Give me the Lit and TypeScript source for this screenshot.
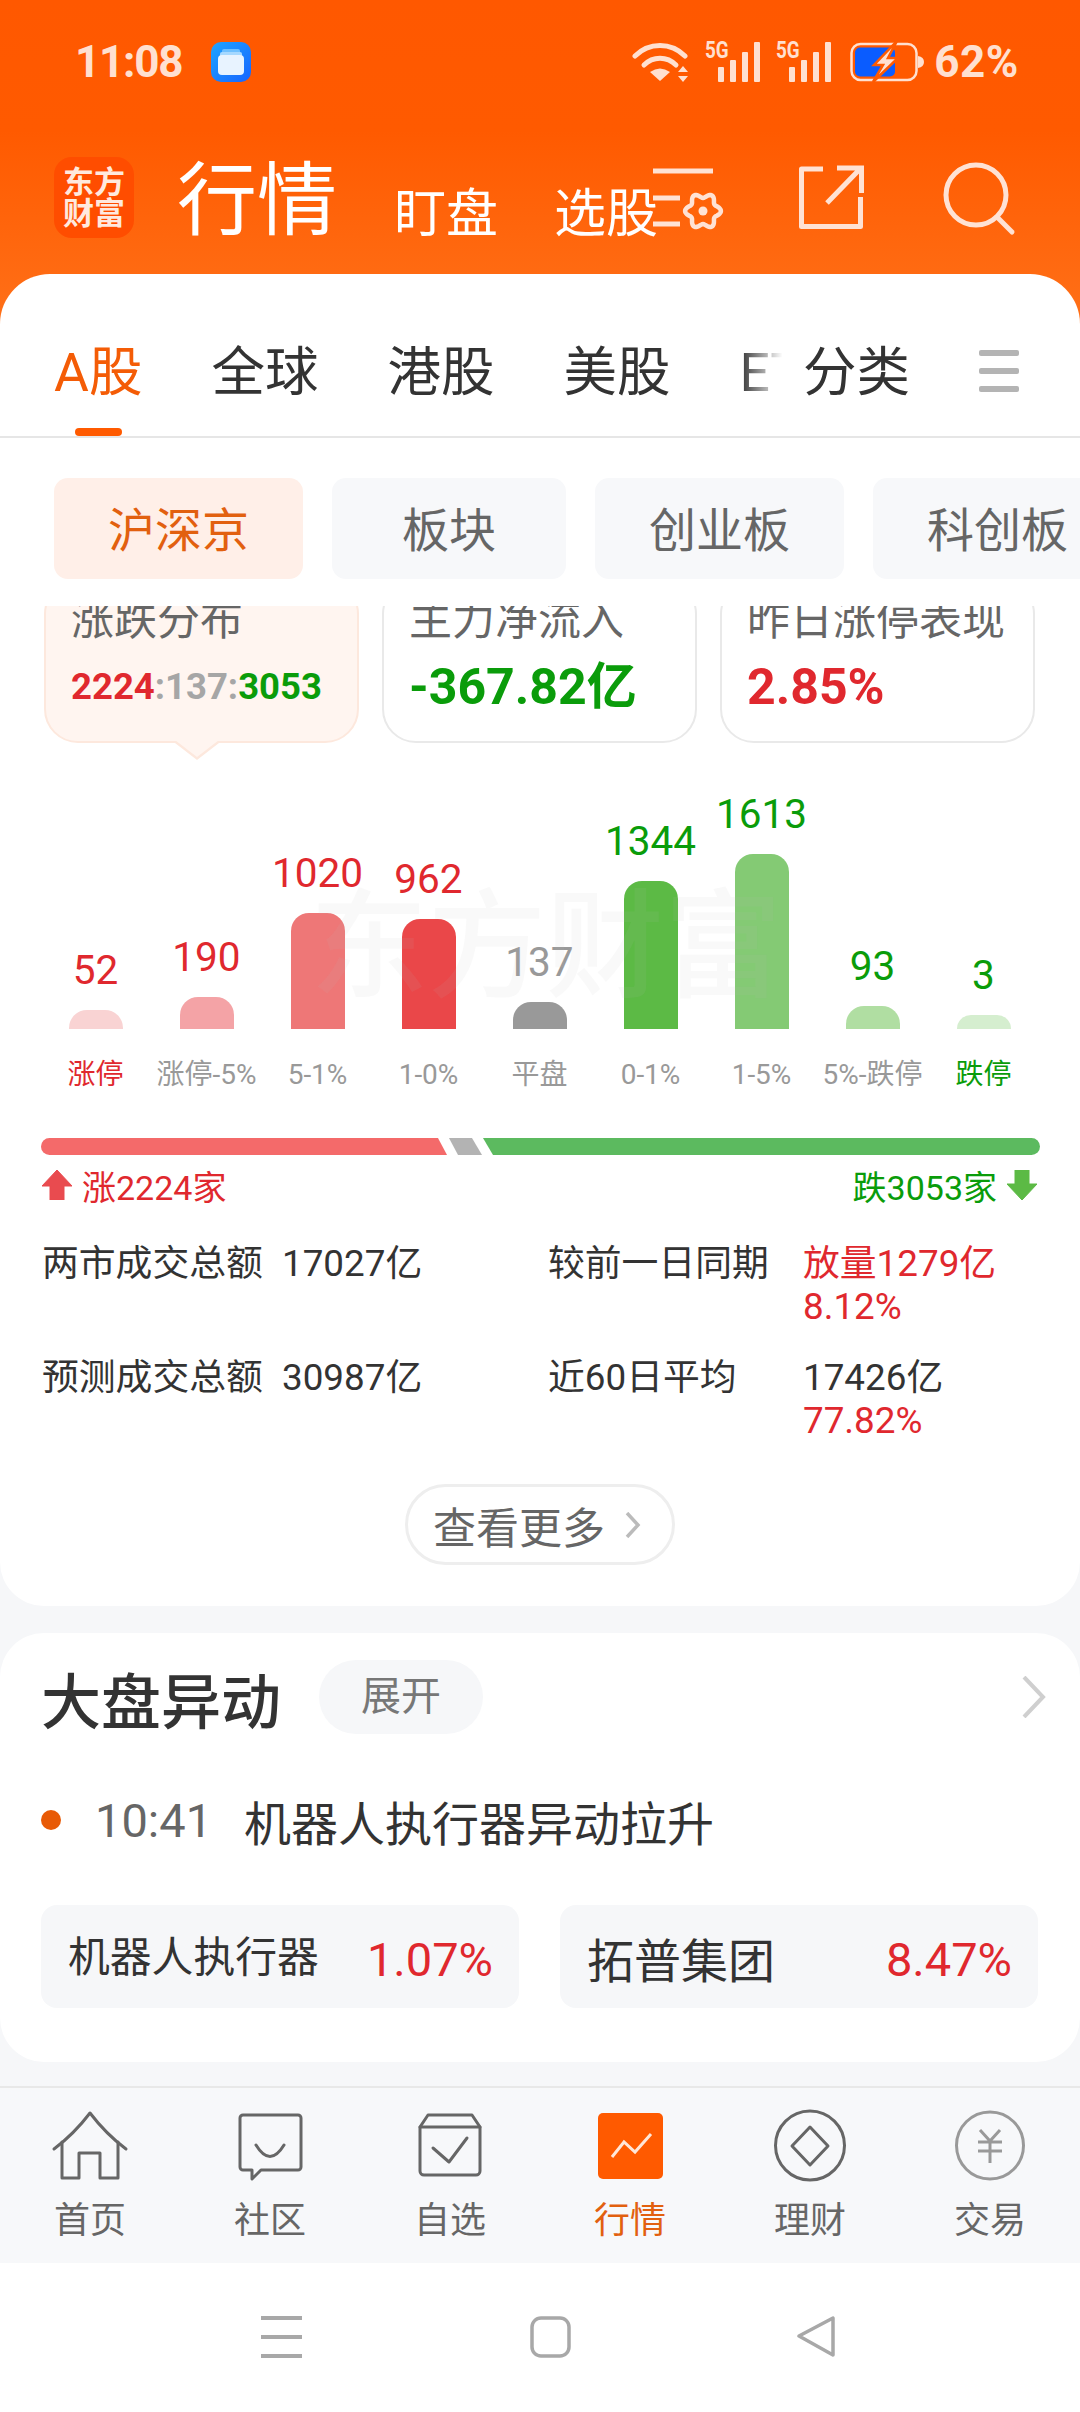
import { LitElement, html, css, svg, unsafeCSS } from "lit";
import { customElement } from "lit/decorators.js";

const RED = "#e0282e";
const GREEN = "#0a9c0a";
const GREY = "#999999";

interface Bar { value: number; label: string; height: number; fill: string; valueColor: string; labelColor: string; }

const BARS: Bar[] = [
  { value: 52, label: "涨停", height: 19, fill: "#f9d3d3", valueColor: RED, labelColor: RED },
  { value: 190, label: "涨停-5%", height: 32, fill: "#f4a3a6", valueColor: RED, labelColor: GREY },
  { value: 1020, label: "5-1%", height: 116, fill: "#ee7777", valueColor: RED, labelColor: GREY },
  { value: 962, label: "1-0%", height: 110, fill: "#ea4749", valueColor: RED, labelColor: GREY },
  { value: 137, label: "平盘", height: 27, fill: "#999999", valueColor: GREY, labelColor: GREY },
  { value: 1344, label: "0-1%", height: 148, fill: "#5cba45", valueColor: GREEN, labelColor: GREY },
  { value: 1613, label: "1-5%", height: 175, fill: "#84ca74", valueColor: GREEN, labelColor: GREY },
  { value: 93, label: "5%-跌停", height: 23, fill: "#b0dea2", valueColor: GREEN, labelColor: GREY },
  { value: 3, label: "跌停", height: 14, fill: "#d5eecf", valueColor: GREEN, labelColor: GREEN },
];

// Scalloped outline for the settings cog in the header.
function cogPath(cx: number, cy: number, r: number, amp: number, lobes: number): string {
  const pts: string[] = [];
  for (let i = 0; i < 96; i++) {
    const t = (i / 96) * Math.PI * 2;
    const rad = r + amp * Math.cos(lobes * t);
    pts.push(`${(cx + rad * Math.cos(t)).toFixed(2)} ${(cy + rad * Math.sin(t)).toFixed(2)}`);
  }
  return `M${pts.join("L")}Z`;
}

const signal = html`<span class="signal"><span class="five-g">5G</span>
  <svg width="44" height="40" viewBox="0 0 44 40" fill="#ffe0d0">
    <rect x="1" y="25" width="6" height="15" rx="1"/><rect x="13" y="18" width="6" height="22" rx="1"/>
    <rect x="25" y="10" width="6" height="30" rx="1"/><rect x="37" y="0" width="6" height="40" rx="1"/>
  </svg></span>`;

const NAV_ICONS = [
  svg`<g fill="none" stroke="#666" stroke-width="3" stroke-linejoin="round" stroke-linecap="round">
    <path d="M4 41 Q24 26 40 5 Q56 26 76 41"/><path d="M12 34V70H29V45H50V70H68V34"/></g>`,
  svg`<g fill="none" stroke="#666" stroke-width="3" stroke-linejoin="round" stroke-linecap="round">
    <path d="M13 7H68a3 3 0 0 1 3 3V59a3 3 0 0 1-3 3H31L22 71V62H13a3 3 0 0 1-3-3V10a3 3 0 0 1 3-3Z"/>
    <path d="M26 37Q40 60 54 37"/></g>`,
  svg`<g fill="none" stroke="#666" stroke-width="3" stroke-linejoin="round" stroke-linecap="round">
    <path d="M10 19L18 7H62L70 19V63a4 4 0 0 1-4 4H14a4 4 0 0 1-4-4Z"/><path d="M10 19H70"/>
    <path d="M23 40L39 54L57 30"/></g>`,
  svg`<rect x="8" y="5" width="65" height="66" rx="5" fill="#ff5a00"/>
    <path d="M22 49L34 34L45 44L61 26" fill="none" stroke="#ffe6d8" stroke-width="3"/>`,
  svg`<g fill="none" stroke="#666" stroke-width="3" stroke-linejoin="round">
    <circle cx="40" cy="37.5" r="34.5"/><path d="M40 19L58 38L40 57L22 38Z"/></g>`,
  svg`<g fill="none" stroke="#999" stroke-width="3">
    <circle cx="40" cy="37.5" r="33.5"/><path d="M30 22L40 33L50 22M28 34H52M28 43H52M40 33V55"/></g>`,
];
const NAV_LABELS = ["首页", "社区", "自选", "行情", "理财", "交易"];

@customElement("app-root")
export class AppRoot extends LitElement {
  static styles = css`
    :host {
      display: block;
      width: 1080px;
      height: 2412px;
      font-family: Roboto, "Noto Sans CJK SC", sans-serif;
      color: #333;
    }
    * { box-sizing: border-box; }
    .page {
      width: 1080px;
      height: 2412px;
      display: flex;
      flex-direction: column;
      overflow: hidden;
      background: linear-gradient(#ff5800 0, #ff5a00 130px, #ff7018 324px, #f6f7f9 324px);
    }

    /* status bar */
    .status {
      height: 124px;
      margin-bottom: -2px;
      flex: none;
      display: flex;
      align-items: center;
      padding: 0 61px 0 75px;
      color: #ffe0d0;
      font-weight: 700;
      font-size: 44px;
    }
    .clock { width: 136px; letter-spacing: -1.2px; }
    .right { margin-left: auto; display: flex; align-items: center; }
    .signal { position: relative; display: block; width: 54px; height: 40px; margin-left: 17px; }
    .signal svg { position: absolute; right: 0; top: 0; }
    .five-g {
      position: absolute; left: -2px; top: -3px;
      font-size: 23px; line-height: 24px; font-weight: 700;
      transform: scaleX(0.82); transform-origin: left top;
    }
    .pct { margin-left: 8px; letter-spacing: 0.6px; }

    /* orange header */
    .head {
      height: 152px;
      flex: none;
      position: relative;
      display: flex;
      padding: 35px 0 0 54px;
      color: #fff;
    }
    .logo {
      width: 80px; height: 81px;
      flex: none;
      border-radius: 18px;
      background: #ff4d00;
      color: #ffe9de;
      display: flex; flex-direction: column; align-items: center; justify-content: center;
      font-size: 31px; line-height: 31px; font-weight: 700;
    }
    .title { margin-left: 43px; font-size: 80px; line-height: 84px; height: 84px; margin-top: 2px; }
    .sub { font-size: 52px; line-height: 60px; margin-top: 28px; }
    .sub.a { margin-left: 57px; }
    .sub.b { margin-left: 56px; }
    .actions { position: absolute; left: 0; top: -122px; pointer-events: none; }

    /* white panel */
    .panel {
      flex: 1;
      min-height: 0;
      display: flex;
      flex-direction: column;
      background: #fff;
      border-radius: 50px 50px 0 0;
    }
    .tabbar {
      height: 164px;
      flex: none;
      display: flex;
      padding: 32px 0 0 54px;
      border-bottom: 2px solid #e6e6e6;
      font-size: 53.5px;
      color: #333;
    }
    .tab-scroll {
      width: 736px;
      flex: none;
      height: 132px;
      position: relative;
      display: flex;
      gap: 69px;
      overflow: hidden;
    }
    .tab-scroll::after {
      content: "";
      position: absolute;
      right: 0; top: 0; bottom: 10px;
      width: 50px;
      background: linear-gradient(90deg, rgba(255,255,255,0), #fff 85%);
    }
    .tab { position: relative; height: 130px; line-height: 134px; flex: none; }
    .tab.on { color: #f45c06; }
    .tab.on::after {
      content: "";
      position: absolute;
      left: 21px; bottom: 0;
      width: 47px; height: 8px;
      border-radius: 4px;
      background: #ff5a00;
    }
    .tab.fixed { margin-left: 13px; }
    .burger { margin-left: 69px; height: 130px; display: flex; align-items: center; }

    .subtabs {
      flex: none;
      display: flex;
      gap: 29px;
      padding: 40px 0 27px 54px;
      overflow: hidden;
      font-size: 47px;
      color: #666;
    }
    .subtab {
      flex: none;
      min-width: 234px;
      height: 101px;
      line-height: 105px;
      padding: 0 54px;
      text-align: center;
      border-radius: 14px;
      background: #f7f8fa;
    }
    .subtab.on { background: #ffefe8; color: #e2600f; }

    /* clipped scrolling area */
    .scroller {
      flex: 1;
      min-height: 0;
      overflow: hidden;
      background: #f6f7f9;
    }
    .block {
      background: #fff;
      border-radius: 0 0 44px 44px;
      padding-bottom: 41px;
      position: relative;
    }
    .cards {
      display: flex;
      gap: 23px;
      padding: 0 44px;
      margin-top: -26px;
    }
    .card {
      width: 315px;
      height: 163px;
      flex: none;
      position: relative;
      padding: 8px 0 0 25px;
      border: 2px solid #e9e9e9;
      border-radius: 34px;
      background: #fff;
    }
    .card.on { background: #fff5f0; border-color: #fde8dd; }
    .card.on::before, .card.on::after {
      content: "";
      position: absolute;
      left: 129px;
      width: 44px;
      height: 17px;
      clip-path: polygon(0 0, 100% 0, 50% 100%);
    }
    .card.on::before { bottom: -19px; background: #fde8dd; }
    .card.on::after { bottom: -16px; background: #fff5f0; }
    .card-name { font-size: 43px; line-height: 60px; color: #666; white-space: nowrap; }
    .card-val { line-height: 80px; margin-top: -3px; font-weight: 700; font-size: 50px; white-space: nowrap; }
    .card-val.ratio { font-size: 36.5px; }
    .up { color: ${unsafeCSS(RED)}; }
    .flat { color: #a6a6a6; }
    .down { color: ${unsafeCSS(GREEN)}; }

    .chart {
      position: relative;
      display: grid;
      grid-template-columns: repeat(9, 111px);
      align-items: end;
      height: 351px;
      padding: 0 0 40px 40px;
    }
    .col { display: flex; flex-direction: column; align-items: center; white-space: nowrap; }
    .col-val { font-size: 40.5px; line-height: 40px; margin-bottom: 20px; }
    .col-bar { width: 54px; border-radius: 18px 18px 0 0; flex: none; }
    .col-label { font-size: 28px; line-height: 40px; height: 40px; margin-top: 26px; margin-bottom: -41px; }
    .mark {
      position: absolute;
      left: 310px; top: 146px;
      font-size: 118px; line-height: 118px;
      font-weight: 500;
      white-space: nowrap;
      color: rgba(190,190,190,0.09);
    }

    .ratio-bar { display: block; margin: 44px 0 0 41px; }
    .legend {
      display: flex;
      justify-content: space-between;
      align-items: center;
      height: 40px;
      margin-top: 10px;
      padding: 0 43px 0 42px;
      font-size: 34px;
    }
    .legend > span { display: flex; align-items: center; gap: 10px; }

    .facts {
      display: grid;
      grid-template-columns: 240px 266px 255px 1fr;
      row-gap: 28px;
      padding-left: 42px;
      margin-top: 37px;
      font-size: 36.8px;
      line-height: 43px;
      color: #333;
    }
    .facts > div { height: 86px; white-space: nowrap; }

    .more {
      width: 270px;
      height: 81px;
      margin: 42px auto 0;
      display: flex;
      align-items: center;
      padding-left: 25px;
      border: 3px solid #eeeeee;
      border-radius: 41px;
      font-size: 43px;
      color: #666;
    }
    .more svg { margin-left: 20px; }

    .alert {
      margin-top: 27px;
      background: #fff;
      border-radius: 44px;
      padding: 27px 41px 54px;
    }
    .alert-head { display: flex; align-items: center; height: 74px; }
    .alert-title { font-size: 60px; font-weight: 500; }
    .pill {
      width: 164px; height: 74px; line-height: 74px;
      margin-left: 38px;
      text-align: center;
      border-radius: 37px;
      background: #f6f7f9;
      font-size: 40px;
      color: #777;
    }
    .alert-head svg { margin-left: auto; margin-right: -7px; }
    .event { display: flex; align-items: center; height: 60px; margin-top: 56px; }
    .dot { width: 20px; height: 20px; border-radius: 50%; background: #e85a06; flex: none; }
    .time { margin-left: 34px; font-size: 47px; color: #666; width: 149px; flex: none; }
    .event-text { font-size: 47px; white-space: nowrap; }
    .stocks { display: flex; gap: 41px; margin-top: 55px; }
    .stock {
      width: 478px; height: 103px;
      display: flex; align-items: center; justify-content: space-between;
      padding: 0 26px 0 27px;
      border-radius: 16px;
      background: #f6f7f9;
    }
    .stock-name { font-size: 41.8px; margin-top: -5px; }
    .stock-name.big { font-size: 47px; margin-top: 1px; }
    .stock-pct { font-size: 47px; margin-top: 5px; color: ${unsafeCSS(RED)}; }

    /* bottom navigation */
    .nav {
      height: 177px;
      flex: none;
      display: grid;
      grid-template-columns: repeat(6, 180px);
      background: #f7f8fa;
      border-top: 2px solid #e8e8e8;
    }
    .nav-item {
      display: flex; flex-direction: column; align-items: center;
      padding-top: 20px;
      font-size: 36px;
      line-height: 44px;
      color: #666;
    }
    .nav-item svg { display: block; flex: none; }
    .nav-item span { margin-top: 15px; }
    .nav-item.on { color: #e2600f; }

    .sysbar {
      height: 149px;
      flex: none;
      background: #fff;
      display: flex;
      padding: 53px 0 0 261px;
    }
    .sysbar svg { display: block; }
  `;

  render() {
    return html`
      <div class="page">
        <div class="status">
          <span class="clock">11:08</span>
          <svg width="40" height="40" viewBox="0 0 40 40">
            <defs><linearGradient id="note" x1="0" y1="0" x2="1" y2="1">
              <stop offset="0" stop-color="#20a4ff"/><stop offset="1" stop-color="#1664ff"/></linearGradient></defs>
            <rect width="40" height="40" rx="10" fill="url(#note)"/>
            <rect x="11" y="7" width="18" height="6" rx="2" fill="#6fc0ff"/>
            <rect x="9" y="10" width="22" height="6" rx="2" fill="#a6d8ff"/>
            <rect x="7" y="13" width="26" height="20" rx="4" fill="#e8f3ff"/>
          </svg>
          <div class="right">
            <svg width="58" height="42" viewBox="0 0 58 42" fill="none" stroke="#ffe0d0" stroke-width="5" stroke-linecap="round">
              <path d="M3 15C17 1 39 1 53 15"/><path d="M12 24C21 15 35 15 44 24"/>
              <path d="M28 40L18 31Q28 24 38 31Z" fill="#ffe0d0" stroke="none"/>
              <path d="M46 31L51 25L56 31ZM46 35H56L51 41Z" fill="#ffe0d0" stroke="none"/>
            </svg>
            ${signal}${signal}
            <svg style="margin-left:18px" width="76" height="42" viewBox="0 0 76 42">
              <rect x="1.5" y="3" width="65" height="36" rx="9" fill="none" stroke="#ffe0d0" stroke-width="2.5"/>
              <rect x="5" y="6.5" width="40" height="29" rx="5" fill="#0a5cff"/>
              <path d="M68 15q6 1 6 6t-6 6Z" fill="#ffe0d0"/>
              <path d="M47 0L24 24H33L23 41L48 17H38Z" fill="#ffe0d0" stroke="#ff5a00" stroke-width="2.5"/>
            </svg>
            <span class="pct">62%</span>
          </div>
        </div>

        <div class="head">
          <div class="logo"><span>东方</span><span>财富</span></div>
          <div class="title">行情</div>
          <div class="sub a">盯盘</div>
          <div class="sub b">选股</div>
          <svg class="actions" width="1080" height="274" viewBox="0 0 1080 274" fill="none" stroke="#ffe2d4" stroke-width="5">
            <path d="M653 171H713M653 198H680M653 224H680"/>
            <path d=${cogPath(703, 211, 15.5, 2.4, 6)} stroke-width="4.5"/>
            <circle cx="703" cy="211" r="4.5" fill="#ffe2d4" stroke="none"/>
            <path d="M823 169H801.5V226.5H860.5V197" stroke-linejoin="round"/>
            <path d="M827 203L859 170M837 168H861.5V193"/>
            <circle cx="976" cy="195" r="30"/>
            <path d="M997 217L1012 232" stroke-linecap="round"/>
          </svg>
        </div>

        <div class="panel">
          <div class="tabbar">
            <div class="tab-scroll">
              <div class="tab on">A股</div><div class="tab">全球</div><div class="tab">港股</div>
              <div class="tab">美股</div><div class="tab">ETF</div>
            </div>
            <div class="tab fixed">分类</div>
            <div class="burger">
              <svg width="40" height="42" viewBox="0 0 40 42" fill="#b4b4b4">
                <rect y="0" width="40" height="6" rx="2"/><rect y="18" width="40" height="6" rx="2"/><rect y="36" width="40" height="6" rx="2"/>
              </svg>
            </div>
          </div>

          <div class="subtabs">
            <div class="subtab on">沪深京</div><div class="subtab">板块</div>
            <div class="subtab">创业板</div><div class="subtab">科创板</div>
          </div>

          <div class="scroller">
            <div class="block">
              <div class="cards">
                <div class="card on">
                  <div class="card-name">涨跌分布</div>
                  <div class="card-val ratio"><span class="up">2224</span><span class="flat">:137:</span><span class="down">3053</span></div>
                </div>
                <div class="card">
                  <div class="card-name">主力净流入</div>
                  <div class="card-val down">-367.82亿</div>
                </div>
                <div class="card">
                  <div class="card-name">昨日涨停表现</div>
                  <div class="card-val up">2.85%</div>
                </div>
              </div>

              <div class="chart">
                ${BARS.map(
                  (b) => html`<div class="col">
                    <div class="col-val" style="color:${b.valueColor}">${b.value}</div>
                    <div class="col-bar" style="height:${b.height}px;background:${b.fill}"></div>
                    <div class="col-label" style="color:${b.labelColor}">${b.label}</div>
                  </div>`
                )}
                <div class="mark">东方财富</div>
              </div>

              <svg class="ratio-bar" width="999" height="17" viewBox="0 0 999 17">
                <path d="M8.5 0H397L406 17H8.5a8.5 8.5 0 0 1 0-17Z" fill="#f46a6a"/>
                <path d="M408 0H431L441 17H417Z" fill="#b3b3b3"/>
                <path d="M442 0H990.5a8.5 8.5 0 0 1 0 17H452Z" fill="#5cba5f"/>
              </svg>

              <div class="legend">
                <span class="up">
                  <svg width="30" height="30" viewBox="0 0 30 30"><path d="M15 0L30 16H22V30H8V16H0Z" fill="#e94b4f" stroke="#e94b4f" stroke-linejoin="round"/></svg>
                  涨2224家
                </span>
                <span class="down">
                  跌3053家
                  <svg width="30" height="30" viewBox="0 0 30 30"><path d="M8 0H22V14H30L15 30L0 14H8Z" fill="#5cba45" stroke="#5cba45" stroke-linejoin="round"/></svg>
                </span>
              </div>

              <div class="facts">
                <div>两市成交总额</div><div>17027亿</div><div>较前一日同期</div>
                <div class="up">放量1279亿<br />8.12%</div>
                <div>预测成交总额</div><div>30987亿</div><div>近60日平均</div>
                <div>17426亿<br /><span class="up">77.82%</span></div>
              </div>

              <div class="more">查看更多
                <svg width="16" height="26" viewBox="0 0 16 26" fill="none" stroke="#bbb" stroke-width="3.5"><path d="M2 1L13 13L2 25"/></svg>
              </div>
            </div>

            <div class="alert">
              <div class="alert-head">
                <div class="alert-title">大盘异动</div>
                <div class="pill">展开</div>
                <svg width="24" height="42" viewBox="0 0 24 42" fill="none" stroke="#cfcfcf" stroke-width="4"><path d="M2 1L21 21L2 41"/></svg>
              </div>
              <div class="event">
                <span class="dot"></span><span class="time">10:41</span>
                <span class="event-text">机器人执行器异动拉升</span>
              </div>
              <div class="stocks">
                <div class="stock"><span class="stock-name">机器人执行器</span><span class="stock-pct">1.07%</span></div>
                <div class="stock"><span class="stock-name big">拓普集团</span><span class="stock-pct">8.47%</span></div>
              </div>
            </div>
          </div>
        </div>

        <div class="nav">
          ${NAV_LABELS.map(
            (label, i) => html`<div class="nav-item ${i === 3 ? "on" : ""}">
              <svg width="80" height="76" viewBox="0 0 80 76">${NAV_ICONS[i]}</svg>
              <span>${label}</span>
            </div>`
          )}
        </div>

        <div class="sysbar">
          <svg width="41" height="43" viewBox="0 0 41 43" fill="#a8a8a8">
            <rect y="0" width="41" height="4"/><rect y="19" width="41" height="4"/><rect y="38" width="41" height="4"/>
          </svg>
          <svg style="margin-left:228px" width="41" height="42" viewBox="0 0 41 42" fill="none" stroke="#a8a8a8" stroke-width="3.5">
            <rect x="2" y="2" width="37" height="38" rx="9"/>
          </svg>
          <svg style="margin-left:225px" width="41" height="42" viewBox="0 0 41 42" fill="none" stroke="#a8a8a8" stroke-width="3.5" stroke-linejoin="round">
            <path d="M37 2V39L3 20Z"/>
          </svg>
        </div>
      </div>
    `;
  }
}
